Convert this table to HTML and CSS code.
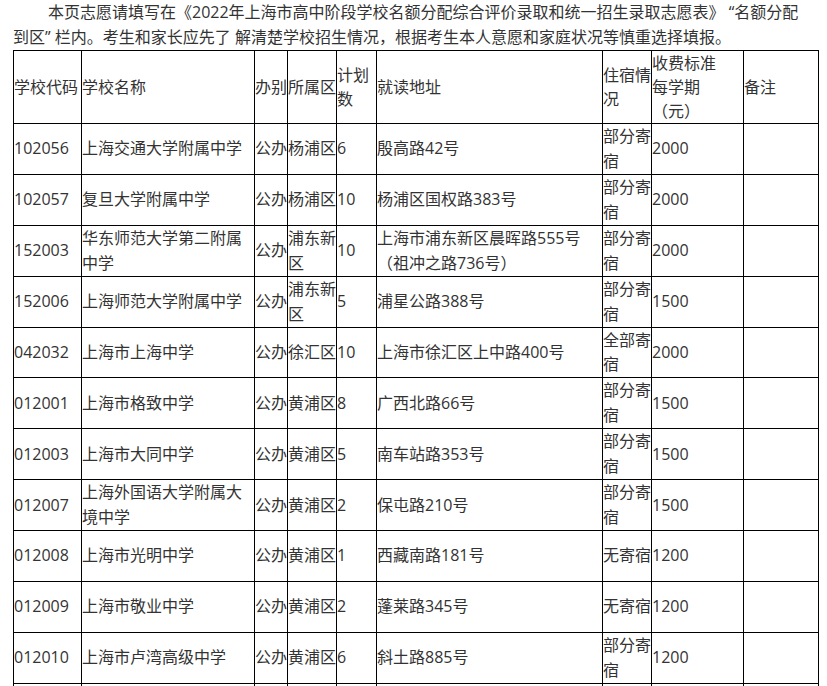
FILE: index.html
```html
<!DOCTYPE html>
<html lang="zh-CN">
<head>
<meta charset="utf-8">
<title>名额分配到区志愿</title>
<link rel="stylesheet" href="styles.css">
</head>
<body>
<div class="page">
  <p class="intro">本页志愿请填写在《2022年上海市高中阶段学校名额分配综合评价录取和统一招生录取志愿表》 “名额分配到区” 栏内。考生和家长应先了 解清楚学校招生情况，根据考生本人意愿和家庭状况等慎重选择填报。</p>
  <table class="schools">
    <colgroup>
      <col class="c-code">
      <col class="c-name">
      <col class="c-type">
      <col class="c-dist">
      <col class="c-plan">
      <col class="c-addr">
      <col class="c-board">
      <col class="c-fee">
      <col class="c-note">
    </colgroup>
    <thead>
      <tr>
        <th>学校代码</th>
        <th>学校名称</th>
        <th>办别</th>
        <th>所属区</th>
        <th>计划数</th>
        <th>就读地址</th>
        <th>住宿情况</th>
        <th>收费标准<br>每学期<br>（元）</th>
        <th>备注</th>
      </tr>
    </thead>
    <tbody>
      <tr><td>102056</td><td>上海交通大学附属中学</td><td>公办</td><td>杨浦区</td><td>6</td><td>殷高路42号</td><td>部分寄宿</td><td>2000</td><td></td></tr>
      <tr><td>102057</td><td>复旦大学附属中学</td><td>公办</td><td>杨浦区</td><td>10</td><td>杨浦区国权路383号</td><td>部分寄宿</td><td>2000</td><td></td></tr>
      <tr><td>152003</td><td>华东师范大学第二附属中学</td><td>公办</td><td>浦东新区</td><td>10</td><td>上海市浦东新区晨晖路555号<br>（祖冲之路736号）</td><td>部分寄宿</td><td>2000</td><td></td></tr>
      <tr><td>152006</td><td>上海师范大学附属中学</td><td>公办</td><td>浦东新区</td><td>5</td><td>浦星公路388号</td><td>部分寄宿</td><td>1500</td><td></td></tr>
      <tr><td>042032</td><td>上海市上海中学</td><td>公办</td><td>徐汇区</td><td>10</td><td>上海市徐汇区上中路400号</td><td>全部寄宿</td><td>2000</td><td></td></tr>
      <tr><td>012001</td><td>上海市格致中学</td><td>公办</td><td>黄浦区</td><td>8</td><td>广西北路66号</td><td>部分寄宿</td><td>1500</td><td></td></tr>
      <tr><td>012003</td><td>上海市大同中学</td><td>公办</td><td>黄浦区</td><td>5</td><td>南车站路353号</td><td>部分寄宿</td><td>1500</td><td></td></tr>
      <tr><td>012007</td><td>上海外国语大学附属大境中学</td><td>公办</td><td>黄浦区</td><td>2</td><td>保屯路210号</td><td>部分寄宿</td><td>1500</td><td></td></tr>
      <tr><td>012008</td><td>上海市光明中学</td><td>公办</td><td>黄浦区</td><td>1</td><td>西藏南路181号</td><td>无寄宿</td><td>1200</td><td></td></tr>
      <tr><td>012009</td><td>上海市敬业中学</td><td>公办</td><td>黄浦区</td><td>2</td><td>蓬莱路345号</td><td>无寄宿</td><td>1200</td><td></td></tr>
      <tr><td>012010</td><td>上海市卢湾高级中学</td><td>公办</td><td>黄浦区</td><td>6</td><td>斜土路885号</td><td>部分寄宿</td><td>1200</td><td></td></tr>
      <tr><td></td><td></td><td></td><td></td><td></td><td></td><td></td><td></td><td></td></tr>
    </tbody>
  </table>
</div>
</body>
</html>
```
FILE: styles.css
```css
html, body {
  margin: 0;
  padding: 0;
  background: #fff;
}

body {
  font-family: "Open Sans", "Noto Sans CJK SC", sans-serif;
  font-size: 16px;
  color: #333;
}

.page {
  padding-left: 13px;
  width: 806px;
}

.intro {
  margin: 0;
  width: 796px;
  line-height: 25px;
  text-indent: 35px;
}

.schools {
  border-collapse: collapse;
  table-layout: fixed;
  width: 806px;
}

.schools th,
.schools td {
  border: 1px solid #000;
  padding: 0;
  text-align: left;
  vertical-align: middle;
  font-weight: normal;
  line-height: 24.93px;
}

.schools th {
  line-height: 24px;
}

.schools tbody td {
  height: 49.86px;
}

.c-code { width: 68px; }
.c-name { width: 173px; }
.c-type { width: 33px; }
.c-dist { width: 49px; }
.c-plan { width: 40px; }
.c-addr { width: 226px; }
.c-board { width: 49px; }
.c-fee { width: 92px; }
.c-note { width: 75px; }
```
